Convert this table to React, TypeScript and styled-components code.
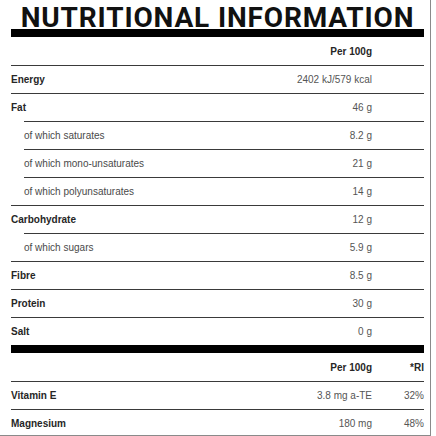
import styled, { createGlobalStyle } from "styled-components"

const GlobalStyle = createGlobalStyle`
  html, body {
    margin: 0;
    padding: 0;
    background: #fff;
  }
`

const Frame = styled.div`
  width: 413px;
  height: 435px;
  border-right: 1px solid #8a8a8a;
  border-bottom: 1px solid #8a8a8a;
  padding: 0 6px 0 11px;
  box-sizing: content-box;
  display: flex;
  flex-direction: column;
  font-family: "Liberation Sans", Arial, sans-serif;
  font-size: 10px;
`

const Title = styled.h1`
  margin: 0;
  height: 29px;
  padding-top: 4px;
  box-sizing: border-box;
  text-align: center;
  font-family: Roboto, "Liberation Sans", sans-serif;
  font-weight: 700;
  font-size: 28px;
  letter-spacing: 0.85px;
  line-height: 28px;
  color: #111;
  white-space: nowrap;
  flex-shrink: 0;
`

const Bar = styled.div`
  height: 8px;
  background: #000;
  flex-shrink: 0;
`

const Row = styled.div<{ $indent?: boolean; $head?: boolean }>`
  display: grid;
  grid-template-columns: 1fr auto 52px;
  align-items: center;
  height: ${(p) => (p.$head ? 28 : 27)}px;
  margin-left: ${(p) => (p.$indent ? 13 : 0)}px;
  border-top: ${(p) => (p.$head ? "none" : "1px solid #3a3a3a")};
  flex-shrink: 0;
`

const Label = styled.span<{ $bold?: boolean }>`
  font-weight: ${(p) => (p.$bold ? 700 : 400)};
  color: ${(p) => (p.$bold ? "#262626" : "#4a4a4a")};
`

const Value = styled.span<{ $bold?: boolean }>`
  text-align: right;
  font-weight: ${(p) => (p.$bold ? 700 : 400)};
  color: ${(p) => (p.$bold ? "#262626" : "#555")};
`

const Ri = styled(Value)``

type Item = { label: string; value: string; sub?: boolean }

const nutrients: Item[] = [
  { label: "Energy", value: "2402 kJ/579 kcal" },
  { label: "Fat", value: "46 g" },
  { label: "of which saturates", value: "8.2 g", sub: true },
  { label: "of which mono-unsaturates", value: "21 g", sub: true },
  { label: "of which polyunsaturates", value: "14 g", sub: true },
  { label: "Carbohydrate", value: "12 g" },
  { label: "of which sugars", value: "5.9 g", sub: true },
  { label: "Fibre", value: "8.5 g" },
  { label: "Protein", value: "30 g" },
  { label: "Salt", value: "0 g" }
]

const vitamins = [
  { label: "Vitamin E", value: "3.8 mg a-TE", ri: "32%" },
  { label: "Magnesium", value: "180 mg", ri: "48%" }
]

export default function App() {
  return (
    <>
      <GlobalStyle />
      <Frame>
        <Title>NUTRITIONAL INFORMATION</Title>
        <Bar />
        <Row $head>
          <span />
          <Value $bold>Per 100g</Value>
          <span />
        </Row>
        {nutrients.map((n) => (
          <Row key={n.label} $indent={n.sub}>
            <Label $bold={!n.sub}>{n.label}</Label>
            <Value>{n.value}</Value>
            <span />
          </Row>
        ))}
        <Bar />
        <Row $head>
          <span />
          <Value $bold>Per 100g</Value>
          <Ri $bold>*RI</Ri>
        </Row>
        {vitamins.map((v) => (
          <Row key={v.label}>
            <Label $bold>{v.label}</Label>
            <Value>{v.value}</Value>
            <Ri>{v.ri}</Ri>
          </Row>
        ))}
      </Frame>
    </>
  )
}
